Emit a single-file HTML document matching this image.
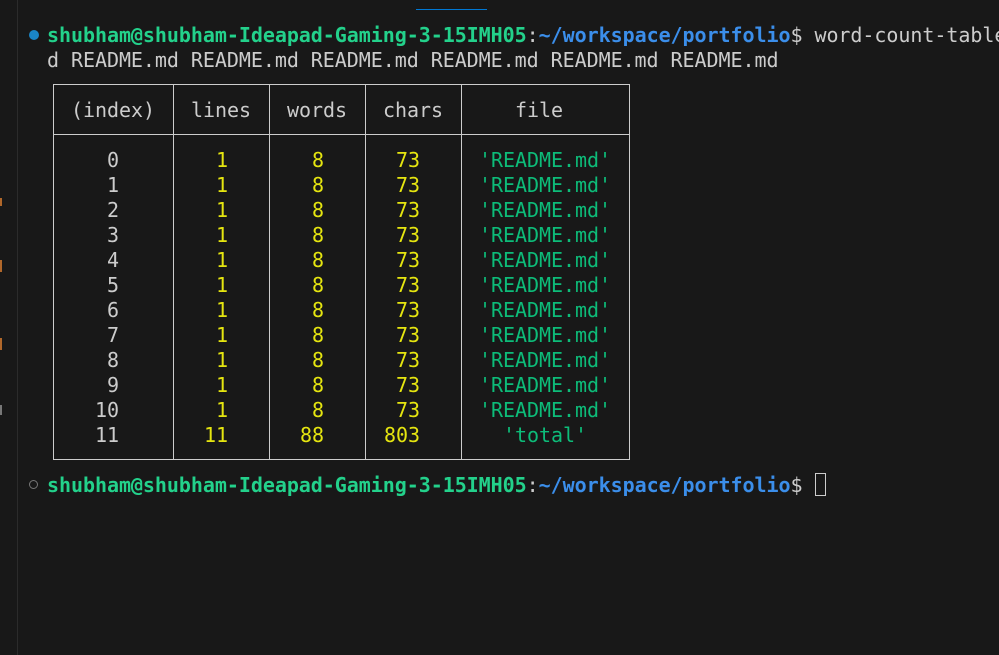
<!DOCTYPE html>
<html><head><style>
body{margin:0;width:999px;height:655px;background:#181818;overflow:hidden;position:relative;font-family:"DejaVu Sans Mono","Liberation Mono",monospace;font-size:20px;letter-spacing:-0.05px;color:#cccccc}
.a{position:absolute;white-space:pre;line-height:25px}
.g{color:#23d18b;font-weight:bold}.b{color:#3b8eea;font-weight:bold}
.y{color:#e5e510}.gr{color:#0dbc79}
.l{position:absolute;background:#cccccc}
</style></head><body>
<div style="position:absolute;left:17px;top:0;width:1px;height:655px;background:#2b2b2b"></div>
<div style="position:absolute;left:416px;top:9px;width:71px;height:1px;background:#0078d4"></div>
<div style="position:absolute;left:0;top:198px;width:2px;height:8px;background:#b0672a"></div>
<div style="position:absolute;left:0;top:260px;width:2px;height:12px;background:#b0672a"></div>
<div style="position:absolute;left:0;top:338px;width:2px;height:12px;background:#b0672a"></div>
<div style="position:absolute;left:0;top:405px;width:2px;height:10px;background:#777"></div>
<div style="position:absolute;left:29px;top:30px;width:10px;height:10px;border-radius:50%;background:#1a85c6"></div>
<div style="position:absolute;left:29px;top:480px;width:7px;height:7px;border-radius:50%;border:1.5px solid #777"></div>
<div class="a" style="left:47px;top:23px"><span class="g">shubham@shubham-Ideapad-Gaming-3-15IMH05</span>:<span class="b">~/workspace/portfolio</span>$ word-count-table
d README.md README.md README.md README.md README.md README.md</div>
<div class="a" style="left:47px;top:473px"><span class="g">shubham@shubham-Ideapad-Gaming-3-15IMH05</span>:<span class="b">~/workspace/portfolio</span>$ </div>
<div style="position:absolute;left:815px;top:473px;width:11px;height:23px;border:1px solid #cccccc;box-sizing:border-box"></div>
<div style="position:absolute;left:53px;top:84px;width:577px;height:376px;border:1px solid #ccc;box-sizing:border-box"></div>
<div class="l" style="left:53px;top:134px;width:577px;height:1px"></div>
<div class="l" style="left:173px;top:84px;width:1px;height:376px"></div>
<div class="l" style="left:269px;top:84px;width:1px;height:376px"></div>
<div class="l" style="left:365px;top:84px;width:1px;height:376px"></div>
<div class="l" style="left:461px;top:84px;width:1px;height:376px"></div>
<div class="a" style="left:71px;top:98px">(index)</div>
<div class="a" style="left:191px;top:98px">lines</div>
<div class="a" style="left:287px;top:98px">words</div>
<div class="a" style="left:383px;top:98px">chars</div>
<div class="a" style="left:515px;top:98px">file</div>
<div class="a" style="left:53px;top:148px;width:66px;text-align:right">0
1
2
3
4
5
6
7
8
9
10
11</div>
<div class="a y" style="left:173px;top:148px;width:55px;text-align:right">1
1
1
1
1
1
1
1
1
1
1
11</div>
<div class="a y" style="left:269px;top:148px;width:55px;text-align:right">8
8
8
8
8
8
8
8
8
8
8
88</div>
<div class="a y" style="left:365px;top:148px;width:55px;text-align:right">73
73
73
73
73
73
73
73
73
73
73
803</div>
<div class="a gr" style="left:461px;top:148px;width:168px;text-align:center">'README.md'
'README.md'
'README.md'
'README.md'
'README.md'
'README.md'
'README.md'
'README.md'
'README.md'
'README.md'
'README.md'
'total'</div>
</body></html>
